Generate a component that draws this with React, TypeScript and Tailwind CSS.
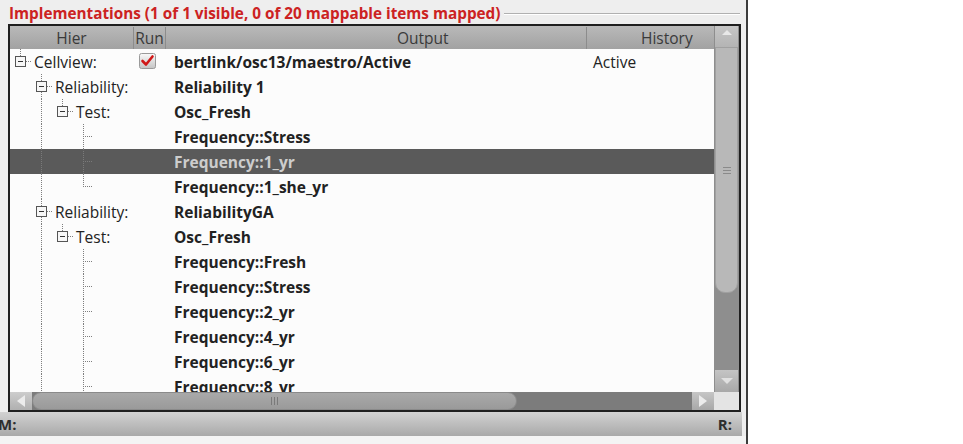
import React from 'react'

type Seg = [number, 'full' | 'top']

type Row = {
  depth?: number
  label?: string
  out: string
  hist?: string
  run?: boolean
  selected?: boolean
  segs: Seg[]
  box?: number
  tick?: number
}

const leaf = (out: string, last = false, selected = false): Row => ({
  out,
  selected,
  segs: [
    [1, 'full'],
    [3, last ? 'top' : 'full'],
  ],
  tick: 3,
})

const rows: Row[] = [
  { depth: 0, label: 'Cellview:', out: 'bertlink/osc13/maestro/Active', hist: 'Active', run: true, segs: [[0, 'top']], box: 0 },
  { depth: 1, label: 'Reliability:', out: 'Reliability 1', segs: [[1, 'full']], box: 1 },
  { depth: 2, label: 'Test:', out: 'Osc_Fresh', segs: [[1, 'full'], [2, 'top']], box: 2 },
  leaf('Frequency::Stress'),
  leaf('Frequency::1_yr', false, true),
  leaf('Frequency::1_she_yr', true),
  { depth: 1, label: 'Reliability:', out: 'ReliabilityGA', segs: [[1, 'full']], box: 1 },
  { depth: 2, label: 'Test:', out: 'Osc_Fresh', segs: [[1, 'full'], [2, 'top']], box: 2 },
  leaf('Frequency::Fresh'),
  leaf('Frequency::Stress'),
  leaf('Frequency::2_yr'),
  leaf('Frequency::4_yr'),
  leaf('Frequency::6_yr'),
  leaf('Frequency::8_yr'),
]

// branch column centres, relative to the Hier cell
const colX = [10, 31, 52, 73]

function TreeLines({ row }: { row: Row }) {
  const w = row.depth !== undefined ? colX[row.depth] + 14 : 124
  const dot = row.selected ? '#7a7a7a' : '#7e7e7e'
  return (
    <svg width={w} height={25} className="shrink-0">
      {row.segs.map(([c, kind], i) => (
        <line
          key={i}
          x1={colX[c] + 0.5}
          x2={colX[c] + 0.5}
          y1={0}
          y2={kind === 'full' ? 25 : 13}
          stroke={dot}
          strokeDasharray="1 1"
        />
      ))}
      {row.tick !== undefined && (
        <line x1={colX[row.tick]} x2={colX[row.tick] + 9} y1={12.5} y2={12.5} stroke={dot} strokeDasharray="1 1" />
      )}
      {row.box !== undefined && (
        <g>
          <line x1={colX[row.box] + 6} x2={colX[row.box] + 11} y1={12.5} y2={12.5} stroke={dot} strokeDasharray="1 1" />
          <rect x={colX[row.box] - 4.5} y={7.5} width={10} height={10} fill="#f7f7f7" stroke="#555" />
          <line x1={colX[row.box] - 2} x2={colX[row.box] + 3} y1={12.5} y2={12.5} stroke="#333" />
        </g>
      )}
    </svg>
  )
}

function RunCheck() {
  return (
    <svg width={18} height={17} viewBox="0 0 18 17">
      <defs>
        <linearGradient id="cb" x1="0" y1="0" x2="0" y2="1">
          <stop offset="0" stopColor="#fafafa" />
          <stop offset="1" stopColor="#c4c4c4" />
        </linearGradient>
      </defs>
      <rect x={0.5} y={0.5} width={16} height={15} rx={2} fill="url(#cb)" stroke="#9a9a9a" />
      <path d="M3.5 8 L7 11.5 L13.5 3.5" fill="none" stroke="#d01818" strokeWidth={2.6} strokeLinecap="round" strokeLinejoin="round" />
    </svg>
  )
}

function Grip({ vertical }: { vertical?: boolean }) {
  return (
    <div className={vertical ? 'flex flex-col gap-[2px]' : 'flex gap-[2px]'}>
      <div className={vertical ? 'h-px w-[8px] bg-[#8a8a8a]' : 'h-[8px] w-px bg-[#7a7a7a]'} />
      <div className={vertical ? 'h-px w-[8px] bg-[#8a8a8a]' : 'h-[8px] w-px bg-[#7a7a7a]'} />
      <div className={vertical ? 'h-px w-[8px] bg-[#8a8a8a]' : 'h-[8px] w-px bg-[#7a7a7a]'} />
    </div>
  )
}

export default function App() {
  return (
    <div className="flex h-[444px] w-[963px] overflow-hidden bg-white font-['Open_Sans',sans-serif] text-[#222]">
      <div className="flex h-[444px] w-[748px] shrink-0 flex-col border-r-2 border-[#3c3c3c] bg-[#eeeeee]">
        {/* group title */}
        <div className="flex h-[24px] items-center pl-[9px] pr-[6px] pt-[4px]">
          <span className="whitespace-nowrap text-[15.3px] font-bold leading-none text-[#cc2222]">
            Implementations (1 of 1 visible, 0 of 20 mappable items mapped)
          </span>
          <div className="ml-[4px] h-[2px] flex-1 border-t border-b border-t-[#b0b0b0] border-b-white" />
        </div>

        {/* tree */}
        <div className="ml-[8px] flex h-[388px] w-[733px] flex-col border-2 border-[#1f1f1f] bg-[#fcfcfc]">
          <div className="flex h-[366px]">
            <div className="flex w-[704px] flex-col">
              {/* header */}
              <div className="flex h-[23px] shrink-0 bg-gradient-to-b from-[#b9b9b9] to-[#a2a2a2] pt-[1px] text-[15.5px] leading-[22px] text-[#3a3a3a]">
                <div className="w-[124px] border-r border-[#8c8c8c] text-center">Hier</div>
                <div className="w-[32px] border-r border-[#8c8c8c] text-center">Run</div>
                <div className="w-[421px] border-r border-[#8c8c8c] pl-[231px]">Output</div>
                <div className="flex-1 pl-[54px]">History</div>
              </div>
              {/* rows */}
              <div className="flex flex-col overflow-hidden">
                {rows.map((r, i) => (
                  <div
                    key={i}
                    className={`flex h-[25px] shrink-0 items-center text-[15.5px] ${
                      r.selected ? 'bg-[#5a5a5a] text-[#cdcdcd]' : ''
                    }`}
                  >
                    <div className="flex w-[124px] shrink-0 items-center overflow-hidden">
                      <TreeLines row={r} />
                      {r.label && <span className="whitespace-nowrap pt-[2px]">{r.label}</span>}
                    </div>
                    <div className="flex w-[32px] shrink-0 items-center pl-[5px]">{r.run && <RunCheck />}</div>
                    <div className="w-[421px] shrink-0 whitespace-nowrap pl-[8px] pt-[2px] font-bold">{r.out}</div>
                    <div className="flex-1 whitespace-nowrap pl-[6px] pt-[2px]">{r.hist}</div>
                  </div>
                ))}
              </div>
            </div>
            {/* vertical scrollbar */}
            <div className="flex w-[25px] flex-col bg-[#8e8e8e] px-[1px]">
              <div className="flex h-[21px] items-start justify-center bg-gradient-to-b from-[#c6c6c6] to-[#b4b4b4]">
                <div className="mt-[4px] h-0 w-0 border-x-[5px] border-b-[5px] border-x-transparent border-b-[#e8e8e8]" />
              </div>
              <div className="flex h-[246px] items-center justify-center rounded-b-[10px] border border-[#a0a0a0] bg-[#b8b8b8]">
                <Grip vertical />
              </div>
              <div className="flex-1" />
              <div className="flex h-[22px] items-center justify-center bg-gradient-to-b from-[#c4c4c4] to-[#a8a8a8]">
                <div className="h-0 w-0 border-x-[6px] border-t-[6px] border-x-transparent border-t-[#e0e0e0]" />
              </div>
            </div>
          </div>
          {/* horizontal scrollbar */}
          <div className="flex h-[18px]">
            <div className="flex w-[22px] items-center justify-center bg-gradient-to-b from-[#cdcdcd] to-[#b0b0b0]">
              <div className="h-0 w-0 border-y-[6px] border-r-[8px] border-y-transparent border-r-[#ececec]" />
            </div>
            <div className="flex w-[660px] bg-[#7c7c7c]">
              <div className="flex h-[18px] w-[485px] items-center justify-center rounded-[9px] border border-[#8a8a8a] bg-gradient-to-b from-[#a9a9a9] to-[#9a9a9a]">
                <Grip />
              </div>
            </div>
            <div className="flex w-[22px] items-center justify-center bg-gradient-to-b from-[#c6c6c6] to-[#a8a8a8]">
              <div className="h-0 w-0 border-y-[6px] border-l-[8px] border-y-transparent border-l-[#ececec]" />
            </div>
            <div className="flex-1 bg-[#e4e4e4]" />
          </div>
        </div>

        {/* status bar */}
        <div className="flex h-[24px] w-[742px] items-center justify-between bg-gradient-to-b from-[#d2d2d2] to-[#a9a9a9] pr-[10px] pt-[1px] text-[15px] font-bold text-[#2e2e2e]">
          <span className="-ml-[2px]">M:</span>
          <span>R:</span>
        </div>
        <div className="flex-1 bg-[#f4f4f4]" />
      </div>
    </div>
  )
}
